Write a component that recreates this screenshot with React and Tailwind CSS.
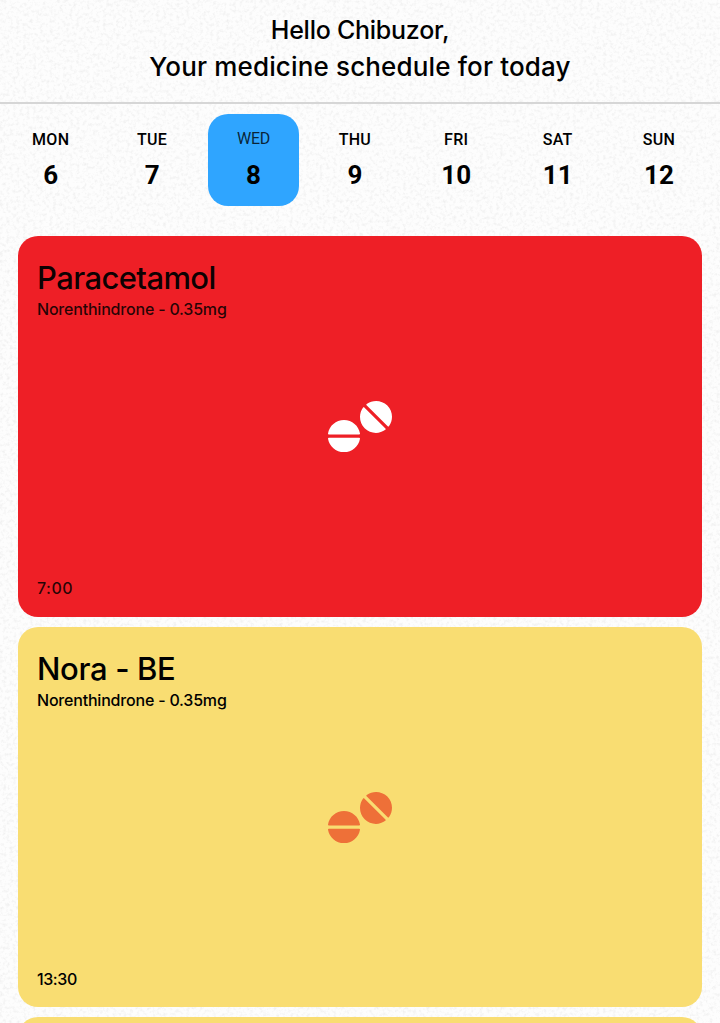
import { FaTablets } from "react-icons/fa";

const days = [
  { name: "MON", date: 6 },
  { name: "TUE", date: 7 },
  { name: "WED", date: 8, active: true },
  { name: "THU", date: 9 },
  { name: "FRI", date: 10 },
  { name: "SAT", date: 11 },
  { name: "SUN", date: 12 },
];

const medicines = [
  { name: "Paracetamol", detail: "Norenthindrone - 0.35mg", time: "7:00", card: "bg-[#ee1f26]", icon: "text-white", title: "tracking-[-0.6px] text-black/95", text: "text-black/85", clock: "tracking-[0.5px]" },
  { name: "Nora - BE", detail: "Norenthindrone - 0.35mg", time: "13:30", card: "bg-[#f9dd72]", icon: "text-[#ee7038]", title: "tracking-[-0.35px] text-black", text: "text-black", clock: "tracking-[-0.4px]" },
  { name: "", detail: "", time: "", card: "bg-[#f9dd72]", icon: "text-[#ee7038]", title: "", text: "", clock: "" },
];

function PaperTexture() {
  return (
    <svg className="absolute inset-0 h-full w-full" aria-hidden="true">
      <filter id="paper" x="0" y="0" width="100%" height="100%" colorInterpolationFilters="sRGB">
        <feTurbulence type="fractalNoise" baseFrequency="0.3" numOctaves="3" seed="8" />
        <feColorMatrix values="0 0 0 0 0.5  0 0 0 0 0.5  0 0 0 0 0.5  0.25 0 0 0 -0.115" />
      </filter>
      <rect width="100%" height="100%" filter="url(#paper)" />
    </svg>
  );
}

function Day({ name, date, active }) {
  return (
    <div className={`flex h-[92px] w-[91.4px] shrink-0 flex-col items-center rounded-[20px] font-[Roboto] text-black ${active ? "bg-[#2fa5ff]" : ""}`}>
      <span className={`mt-[15px] h-5 text-[16px] leading-5 ${active ? "font-normal tracking-[-0.3px] text-black/80" : "pt-px font-medium tracking-[0.3px]"}`}>{name}</span>
      <span className="mt-[10px] text-[26px] leading-8 font-bold">{date}</span>
    </div>
  );
}

function MedicineCard({ name, detail, time, card, icon, title, text, clock }) {
  return (
    <article className={`grid h-[380.5px] shrink-0 grid-rows-[1fr_auto_1fr] rounded-[20px] px-[19px] ${card}`}>
      <div className="pt-[22px]">
        <h2 className={`text-[31px] leading-[39px] font-medium ${title}`}>{name}</h2>
        <p className={`text-[16px] leading-6 font-medium tracking-[-0.2px] ${text}`}>{detail}</p>
      </div>
      <FaTablets size={64} className={`translate-y-[0.5px] justify-self-center ${icon}`} />
      <p className={`self-end pb-[16.5px] text-[16px] leading-6 font-medium ${text} ${clock}`}>{time}</p>
    </article>
  );
}

export default function App() {
  return (
    <main className="relative h-[1023px] w-full overflow-hidden bg-[#fdfdfd] font-[Inter,sans-serif]">
      <PaperTexture />
      <div className="relative flex flex-col">
        <header className="flex h-[104px] flex-col items-center border-b-2 border-[#d6d6d6] pt-3 font-medium text-black">
          <h1 className="text-[25px] leading-9 tracking-[-0.25px]">Hello Chibuzor,</h1>
          <p className="text-[26px] leading-[37px] tracking-[0.15px]">Your medicine schedule for today</p>
        </header>
        <nav className="flex gap-[10px] pt-[10px] pl-[5px]">
          {days.map((day) => (
            <Day key={day.name} {...day} />
          ))}
        </nav>
        <section className="mt-[30px] flex flex-col gap-[10px] px-[18px]">
          {medicines.map((medicine, index) => (
            <MedicineCard key={index} {...medicine} />
          ))}
        </section>
      </div>
    </main>
  );
}
